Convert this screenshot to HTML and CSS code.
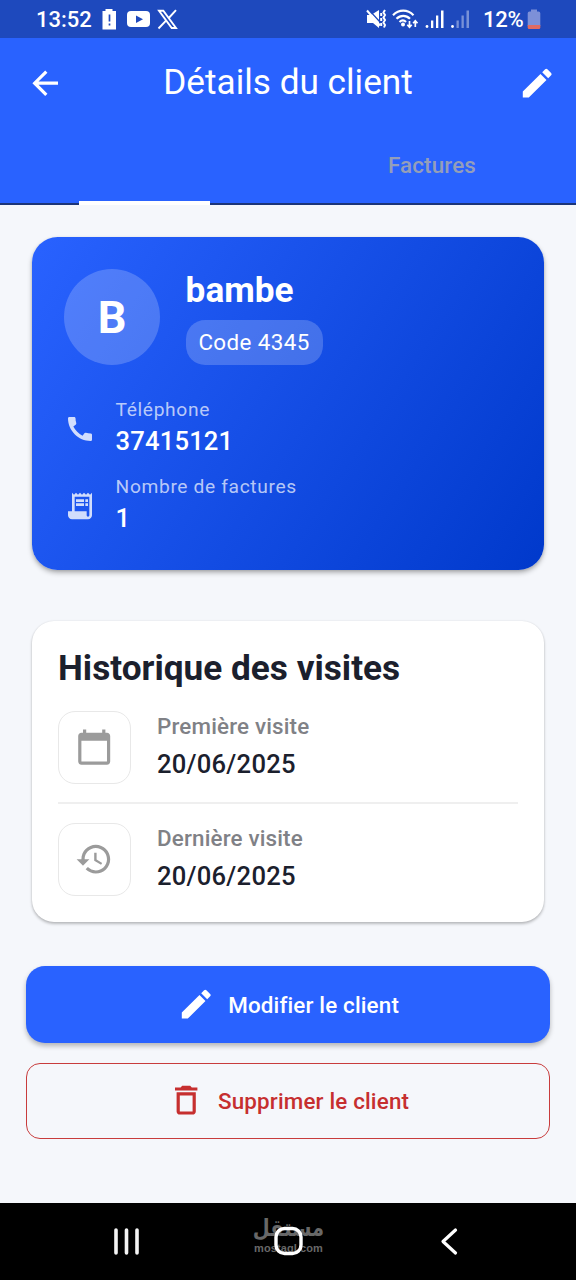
FILE: index.html
```html
<!DOCTYPE html>
<html lang="fr">
<head>
<meta charset="utf-8">
<title>Détails du client</title>
<link rel="stylesheet" href="styles.css">
</head>
<body>
<div class="status-bar">
  <span class="clock">13:52</span>
  <svg class="status-left" width="80" height="38" viewBox="0 0 80 38">
    <path fill="#fff" d="M4.500 9h7v2h3.500v18.500H1.500V11h3z"/>
    <path stroke="#1e49bd" stroke-width="1.700" d="M8.500 14.500v7M8.500 23.500v2"/>
    <rect x="26" y="11" width="23" height="16" rx="4" fill="#fff"/>
    <path fill="#1e49bd" d="M35 15.500l7 3.700-7 3.700z"/>
    <path fill="none" stroke="#fff" stroke-width="1.900" d="M58 10.700h4.300L75 28h-4.300zM75 10.200L67.300 18.500M64.800 20.800L57.500 28.500"/>
  </svg>
  <svg class="status-right" width="108" height="38" viewBox="0 0 108 38">
    <g fill="#fff">
      <path d="M2 15h4l8-5v18l-6-5H2z"/>
      <circle cx="62" cy="26.500" r="1.400"/><rect x="66" y="20.500" width="2.300" height="7.500"/><rect x="71" y="15.500" width="2.300" height="12.500"/><rect x="76" y="10.500" width="2.500" height="17.500"/>
      <circle cx="87.500" cy="26.500" r="1.400"/>
      <path opacity=".4" d="M91.500 20.500h2.300V28h-2.300zM96.500 15.500h2.300V28h-2.300zM101.500 10.500h2.500V28h-2.500z"/>
      <circle cx="38" cy="24.500" r="2"/>
    </g>
    <path stroke="#1e49bd" stroke-width="1.300" d="M4.500 10.500l10 11"/>
    <g fill="none" stroke="#fff">
      <path stroke-width="2" d="M2 10.500l13 15"/>
      <path stroke-width="2" d="M16.200 13v3M16.200 18v3M16.200 23v3M20 10l-1.500 2.500 1.500 2.500-1.500 2.500 1.500 2.500-1.500 2.500 1.500 2.500-1 2.500"/>
      <path stroke-width="2.200" d="M28 15.200c6-6 14.500-6 20.500 0M31.500 18.800c4-4 9.500-4 13.500 0M34.500 22c2.200-2 4.500-2 6.500 0"/>
      <path stroke-width="1.700" d="M44.500 21v6M42.300 24.800l2.200 2.500 2.200-2.500M50.300 27v-6M48.100 23.300l2.200-2.500 2.200 2.500"/>
    </g>
  </svg>
  <span class="percent">12%</span>
  <svg class="battery" width="14" height="38" viewBox="0 0 14 38"><path fill="#7d90d8" d="M4 9.500h6v2h1.500q1.800 0 1.800 1.800V26H.7V13.300q0-1.800 1.800-1.800H4z"/><path fill="#e06b62" d="M.7 25h12.600v2.500q0 1.500-1.500 1.500H2.200Q.7 29 .7 27.500z"/></svg>
</div>

<header class="app-header">
  <div class="app-bar">
    <svg class="icon" viewBox="0 0 24 24"><path d="M20 11H7.830l5.590-5.590L12 4l-8 8 8 8 1.410-1.410L7.830 13H20v-2z"/></svg>
    <h1 class="app-title">Détails du client</h1>
    <svg class="icon" viewBox="0 0 24 24"><path d="M3 17.250V21h3.750L17.810 9.940l-3.750-3.750L3 17.250zM20.710 7.040a1 1 0 0 0 0-1.410l-2.340-2.340a1 1 0 0 0-1.410 0l-1.830 1.830 3.750 3.750 1.830-1.830z"/></svg>
  </div>
  <nav class="tabs">
    <div class="tab tab-active"><div class="indicator"></div></div>
    <div class="tab"><span class="tab-label">Factures</span></div>
  </nav>
</header>

<main class="content">
  <section class="client-card">
    <div class="client-head">
      <div class="avatar">B</div>
      <div class="client-id">
        <div class="client-name">bambe</div>
        <div class="code-pill">Code 4345</div>
      </div>
    </div>
    <div class="info-row">
      <svg class="icon-info" viewBox="0 0 24 24"><path d="M20.010 15.380c-1.230 0-2.420-.2-3.530-.56a.977.977 0 0 0-1.010.24l-1.570 1.970c-2.830-1.350-5.480-3.900-6.890-6.830l1.950-1.660c.27-.28.350-.67.240-1.020-.37-1.110-.56-2.300-.56-3.530 0-.54-.45-.99-.99-.99H4.190C3.650 3 3 3.240 3 3.990 3 13.280 10.730 21 20.010 21c.71 0 .99-.63.99-1.180v-3.450c0-.54-.45-.99-.99-.99z"/></svg>
      <div class="info-text"><div class="info-label">Téléphone</div><div class="info-value">37415121</div></div>
    </div>
    <div class="info-row">
      <svg class="icon-info" viewBox="0 0 24 24"><path d="M19.500 3.500L18 2l-1.500 1.500L15 2l-1.500 1.500L12 2l-1.500 1.500L9 2 7.500 3.500 6 2v14H3v3c0 1.660 1.340 3 3 3h12c1.660 0 3-1.340 3-3V2l-1.500 1.500zM19 19c0 .55-.45 1-1 1s-1-.45-1-1v-3H8V5h11v14z"/><path d="M9 7h6v2H9zM16 7h2v2h-2zM9 10h6v2H9zM16 10h2v2h-2z"/></svg>
      <div class="info-text"><div class="info-label">Nombre de factures</div><div class="info-value">1</div></div>
    </div>
  </section>

  <section class="history-card">
    <h2 class="history-title">Historique des visites</h2>
    <div class="visit">
      <div class="visit-icon"><svg class="icon" viewBox="0 0 24 24"><path d="M20 3h-1V1h-2v2H7V1H5v2H4c-1.100 0-2 .9-2 2v16c0 1.100.9 2 2 2h16c1.100 0 2-.9 2-2V5c0-1.100-.9-2-2-2zm0 18H4V8h16v13z"/></svg></div>
      <div><div class="visit-label">Première visite</div><div class="visit-date">20/06/2025</div></div>
    </div>
    <div class="divider"></div>
    <div class="visit">
      <div class="visit-icon"><svg class="icon" viewBox="0 0 24 24"><path d="M13 3c-4.970 0-9 4.030-9 9H1l3.890 3.890.07.14L9 12H6c0-3.870 3.130-7 7-7s7 3.130 7 7-3.130 7-7 7c-1.930 0-3.680-.79-4.940-2.060l-1.420 1.420C8.270 19.990 10.510 21 13 21c4.970 0 9-4.030 9-9s-4.030-9-9-9zm-1 5v5l4.280 2.540.72-1.210-3.500-2.080V8H12z"/></svg></div>
      <div><div class="visit-label">Dernière visite</div><div class="visit-date">20/06/2025</div></div>
    </div>
  </section>

  <div class="actions">
    <div class="btn btn-primary">
      <svg class="icon" viewBox="0 0 24 24"><path d="M3 17.250V21h3.750L17.810 9.940l-3.750-3.750L3 17.250zM20.710 7.040a1 1 0 0 0 0-1.410l-2.340-2.340a1 1 0 0 0-1.410 0l-1.830 1.830 3.750 3.750 1.830-1.830z"/></svg>
      <span>Modifier le client</span>
    </div>
    <div class="btn btn-danger">
      <svg class="icon" viewBox="0 0 24 24"><path d="M6 19c0 1.100.9 2 2 2h8c1.100 0 2-.9 2-2V7H6v12zM8 9h8v10H8V9zm7.500-5l-1-1h-5l-1 1H5v2h14V4h-3.500z"/></svg>
      <span>Supprimer le client</span>
    </div>
  </div>
</main>

<footer class="nav-bar">
  <svg width="40" height="40" viewBox="0 0 40 40"><path stroke="#f4f4f4" stroke-width="3.600" stroke-linecap="round" d="M9 9v23M19.500 9v23M30 9v23"/></svg>
  <div class="home">
    <div class="watermark"><span class="wm-ar" lang="ar" dir="rtl">مستقل</span><span class="wm-en">mostaql.com</span></div>
    <svg class="home-icon" width="40" height="40" viewBox="0 0 40 40"><rect x="7" y="7.500" width="25" height="25" rx="8.500" fill="none" stroke="#fff" stroke-width="3.400"/></svg>
  </div>
  <svg width="40" height="40" viewBox="0 0 40 40"><path fill="none" stroke="#fff" stroke-width="3.200" stroke-linecap="round" stroke-linejoin="round" d="M25.500 9L13 20.500l12.500 11.500"/></svg>
</footer>
</body>
</html>
```
FILE: styles.css
```css
* { box-sizing: border-box; }
body {
  margin: 0;
  width: 576px;
  height: 1280px;
  display: flex;
  flex-direction: column;
  overflow: hidden;
  background: #f5f7fb;
  font-family: Roboto, "Liberation Sans", sans-serif;
  color: #1b202d;
  white-space: nowrap;
}
svg { display: block; flex: none; }
h1, h2 { margin: 0; }
.icon { width: 38.4px; height: 38.4px; fill: currentColor; }

.status-bar {
  height: 38px;
  flex: none;
  display: flex;
  align-items: center;
  padding-left: 36px;
  background: #1e49bd;
  color: #fff;
  font-size: 22px;
  font-weight: 500;
}
.clock { width: 65px; padding-top: 1px; }
.status-right { margin-left: 184px; }
.percent { width: 44px; margin-left: 10px; padding-top: 1px; letter-spacing: -0.3px; }

.app-header {
  height: 167px;
  flex: none;
  display: flex;
  flex-direction: column;
  background: #2962ff;
  color: #fff;
}
.app-bar {
  height: 90px;
  flex: none;
  display: flex;
  align-items: center;
  justify-content: space-between;
  padding: 0 19.6px 0 25.6px;
}
.app-title { padding: 0 6px 2px 0; font-size: 35.2px; font-weight: 400; }
.tabs {
  flex: 1;
  display: flex;
  border-bottom: 2px solid #1c3578;
}
.tab { flex: 1; display: flex; align-items: center; justify-content: center; }
.tab-active { align-items: flex-end; }
.indicator { width: 131px; height: 4px; margin-bottom: -2px; background: #fff; }
.tab-label { padding-bottom: 2px; color: #949eb9; font-size: 22.4px; font-weight: 500; letter-spacing: 0.16px; }

.content {
  flex: 1;
  padding: 32px 26px 0;
}
.client-card {
  height: 332.6px;
  margin: 0 6px;
  padding: 32px;
  border-radius: 25.6px;
  background: linear-gradient(123deg, #2962ff, #0039cb);
  box-shadow: 0 3px 5px rgba(0, 0, 0, 0.26), 0 1px 3px rgba(0, 0, 0, 0.12);
  color: #fff;
}
.client-head { display: flex; gap: 25.6px; height: 96px; margin-bottom: 32px; }
.avatar {
  width: 96px;
  height: 96px;
  border-radius: 50%;
  background: rgba(255, 255, 255, 0.2);
  display: flex;
  align-items: center;
  justify-content: center;
  font-size: 45px;
  font-weight: 700;
}
.client-name { font-size: 35.2px; line-height: 42px; font-weight: 700; }
.code-pill {
  display: inline-block;
  margin-top: 9px;
  height: 45px;
  padding: 0 12.8px;
  border-radius: 19.2px;
  background: rgba(255, 255, 255, 0.2);
  font-size: 22.4px;
  line-height: 45px;
  letter-spacing: 0.4px;
}
.info-row { display: flex; align-items: center; gap: 19.6px; height: 64px; margin-bottom: 13px; }
.icon-info { width: 32px; height: 32px; fill: rgba(255, 255, 255, 0.8); }
.info-text { padding-bottom: 2px; }
.info-label { font-size: 19.2px; line-height: 25px; letter-spacing: 0.64px; color: rgba(255, 255, 255, 0.7); }
.info-value { font-size: 25.6px; line-height: 38px; font-weight: 500; letter-spacing: 0.16px; }

.history-card {
  height: 301px;
  margin: 51px 6px 0;
  padding: 25px 26px;
  border-radius: 22px;
  background: #fff;
  box-shadow: 0 2px 3px rgba(0, 0, 0, 0.24), 0 0 2px rgba(0, 0, 0, 0.1);
}
.history-title { height: 65px; font-size: 35.2px; line-height: 44px; font-weight: 700; }
.visit { display: flex; align-items: center; gap: 26px; height: 73px; }
.visit-icon {
  width: 73px;
  height: 73px;
  display: flex;
  align-items: center;
  justify-content: center;
  border: 1.6px solid #e8e8e8;
  border-radius: 17px;
  color: #9b9b9b;
}
.visit-label { font-size: 22.4px; line-height: 33px; font-weight: 500; letter-spacing: 0.16px; color: #808186; }
.visit-date { padding-top: 1px; font-size: 25.6px; line-height: 41px; margin-bottom: -1px; font-weight: 500; letter-spacing: 0.24px; }
.divider { height: 2px; margin: 18px 0 19px; background: #efefef; }

.actions { display: flex; flex-direction: column; gap: 19.6px; margin-top: 44.6px; }
.btn {
  height: 76.8px;
  display: flex;
  align-items: center;
  justify-content: center;
  gap: 12.8px;
  border-radius: 19px;
  font-size: 22.4px;
  font-weight: 500;
  letter-spacing: 0.16px;
}
.btn span { padding-top: 1px; }
.btn-primary { background: #2962ff; color: #fff; box-shadow: 0 3px 5px rgba(0, 0, 0, 0.27); }
.btn-danger { height: 76px; border: 1.6px solid #c83c3c; border-radius: 14px; color: #c62f2f; }

.nav-bar {
  height: 77px;
  flex: none;
  display: flex;
  align-items: center;
  justify-content: space-between;
  padding: 0 106px 2px 107px;
  background: #000;
}
.home { position: relative; }
.home-icon { position: relative; }
.watermark {
  position: absolute;
  inset: -3px -16px auto;
  display: flex;
  flex-direction: column;
  align-items: center;
  color: #686868;
}
.wm-ar {
  height: 24px;
  font: 700 19.500px/21px "DejaVu Sans", sans-serif;
  transform: scaleY(1.2);
  transform-origin: 50% 40%;
}
.wm-en { height: 13px; font: 700 11px/13px "Liberation Sans", sans-serif; letter-spacing: 0.1px; }
```
